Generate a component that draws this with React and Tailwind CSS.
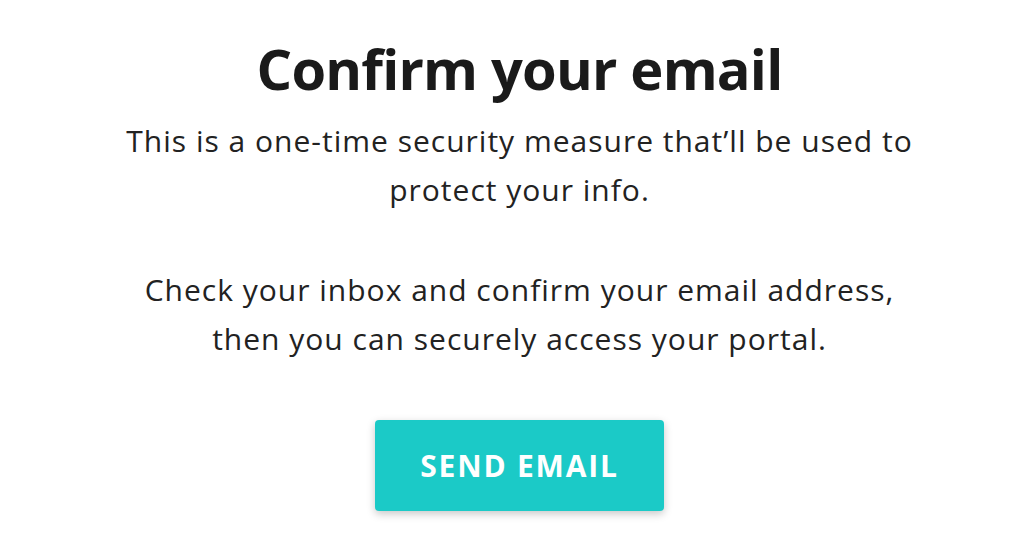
import React from 'react';

const App = () => {
    return (
        <div className="w-[1024px] h-[548px] bg-white flex flex-col items-center pl-[15px] font-['Open_Sans',sans-serif] text-[#1c1c1c] overflow-hidden">
            <h1 className="mt-[36px] text-[56px] leading-[64px] font-bold tracking-[-0.8px] text-[#1a1a1a]">
                Confirm your email
            </h1>
            <div className="mt-[16px] text-center text-[30px] leading-[49px] tracking-[1px] text-[#222]">
                <p>This is a one-time security measure that’ll be used to</p>
                <p>protect your info.</p>
                <p className="mt-[51px]">Check your inbox and confirm your email address,</p>
                <p>then you can securely access your portal.</p>
            </div>
            <button className="mt-[57px] w-[289px] h-[91px] rounded-[4px] bg-[#1bcac7] text-white text-[30px] font-bold tracking-[1.8px] shadow-[0_3px_8px_rgba(0,0,0,0.22)]">
                SEND EMAIL
            </button>
        </div>
    );
};

export default App;
